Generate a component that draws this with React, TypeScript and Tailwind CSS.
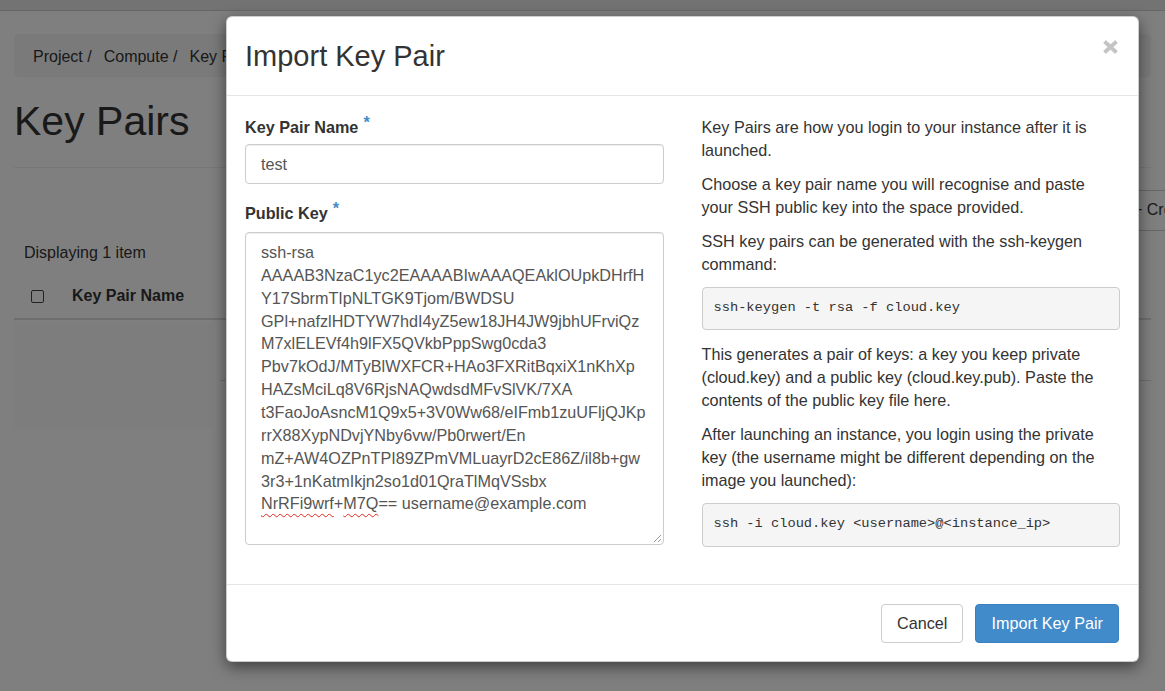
import React from 'react';

const keyLines = [
  'ssh-rsa',
  'AAAAB3NzaC1yc2EAAAABIwAAAQEAklOUpkDHrfH',
  'Y17SbrmTIpNLTGK9Tjom/BWDSU',
  'GPl+nafzlHDTYW7hdI4yZ5ew18JH4JW9jbhUFrviQz',
  'M7xlELEVf4h9lFX5QVkbPppSwg0cda3',
  'Pbv7kOdJ/MTyBlWXFCR+HAo3FXRitBqxiX1nKhXp',
  'HAZsMciLq8V6RjsNAQwdsdMFvSlVK/7XA',
  't3FaoJoAsncM1Q9x5+3V0Ww68/eIFmb1zuUFljQJKp',
  'rrX88XypNDvjYNby6vw/Pb0rwert/En',
  'mZ+AW4OZPnTPI89ZPmVMLuayrD2cE86Z/il8b+gw',
  '3r3+1nKatmIkjn2so1d01QraTlMqVSsbx',
];

const squiggle = 'underline decoration-wavy decoration-[#e0261c] decoration-1 underline-offset-[4px]';

// page behind the backdrop
const KeyPairsPage = () => (
  <div className="w-[1165px] h-[691px] bg-white text-[#333] text-[16px]">
    <div className="h-[11px] bg-[#e6e6e6] border-b border-[#cdcdcd]" />
    <div className="px-[14px]">
      <div className="mt-[23px] h-[43px] bg-[#f5f5f5] rounded-[4px] px-[19px] pt-[2px] flex items-center gap-[12px] whitespace-nowrap">
        <span>Project /</span>
        <span>Compute /</span>
        <span>Key Pairs</span>
      </div>
      <h1 className="mt-[21.5px] text-[41px] leading-[45px] font-normal">Key Pairs</h1>
      <div className="mt-[23px] border-t border-[#eeeeee]" />
      <div className="mt-[22px] flex pl-[1106px] whitespace-nowrap">
        <div className="h-[41px] border border-[#ccc] rounded-[4px] px-[12px] flex items-center">+ Create Key Pair</div>
      </div>
      <div className="mt-[10.5px] px-[10px] leading-[23px]">Displaying 1 item</div>
      <div className="mt-[10px] h-[46px] border-b-2 border-[#dddddd] flex items-center pl-[17px]">
        <div className="w-[13px] h-[13px] border border-[#444] rounded-[2px]" />
        <span className="ml-[28px] font-bold">Key Pair Name</span>
      </div>
      <div className="flex mt-[3px]">
        <div className="w-[199px] h-[105px] bg-[#fbfbfb]" />
        <div className="flex-1 ml-[7px] h-[58px] border-b border-[#dddddd]" />
      </div>
    </div>
  </div>
);

const Pre = ({ children, h }: { children: React.ReactNode; h: string }) => (
  <div className={`${h} bg-[#f5f5f5] border border-[#ccc] rounded-[4px] px-[11px] flex items-center font-['Liberation_Mono','DejaVu_Sans_Mono',monospace] text-[13.7px] text-[#333] whitespace-pre`}>
    {children}
  </div>
);

const Required = () => <span className="relative -top-[5px] ml-[5px] text-[#428bca]">*</span>;

const ImportKeyPairModal = () => (
  <div className="relative w-[913px] bg-white border border-black/20 rounded-[6px] shadow-[0_5px_15px_rgba(0,0,0,0.5)] text-[#333] text-[16.2px]">
    <div className="h-[79px] px-[18px] pt-[1px] flex items-center border-b border-[#e5e5e5]">
      <h4 className="text-[29px] font-normal leading-none">Import Key Pair</h4>
    </div>
    <svg className="absolute top-[22px] right-[19px]" width="17" height="16" viewBox="0 0 17 16">
      <path d="M2.5 2.5 L14.5 13.5 M14.5 2.5 L2.5 13.5" stroke="#c4c4c4" strokeWidth="3.8" strokeLinecap="butt" />
    </svg>

    <div className="h-[488px] px-[18px] pt-[20px] grid grid-cols-2 gap-[38px]">
      <div>
        <div className="font-bold leading-[23px]">
          Key Pair Name<Required />
        </div>
        <input
          readOnly
          defaultValue="test"
          className="mt-[5px] w-full h-[40px] border border-[#ccc] rounded-[4px] px-[15px] pt-[1px] text-[#555] shadow-[inset_0_1px_1px_rgba(0,0,0,0.075)] outline-none"
        />
        <div className="mt-[18px] font-bold leading-[23px]">
          Public Key<Required />
        </div>
        <div className="relative mt-[7px] h-[313px] border border-[#ccc] rounded-[4px] pl-[15px] pt-[8px] leading-[22.86px] text-[#555] whitespace-pre overflow-hidden shadow-[inset_0_1px_1px_rgba(0,0,0,0.075)]">
          {keyLines.map((line) => (
            <div key={line}>{line}</div>
          ))}
          <div>
            <span className={squiggle}>NrRFi9wrf</span>+<span className={squiggle}>M7Q</span>== username@example.com
          </div>
          <svg className="absolute bottom-[1px] right-[1px]" width="10" height="10" viewBox="0 0 10 10">
            <path d="M9 2 L2 9 M9 6 L6 9" stroke="#9a9a9a" strokeWidth="1" />
          </svg>
        </div>
      </div>

      <div className="leading-[22.86px]">
        <p className="mb-[11.43px]">Key Pairs are how you login to your instance after it is<br />launched.</p>
        <p className="mb-[11.43px]">Choose a key pair name you will recognise and paste<br />your SSH public key into the space provided.</p>
        <p className="mb-[11.43px]">SSH key pairs can be generated with the ssh-keygen<br />command:</p>
        <Pre h="h-[43px]">ssh-keygen -t rsa -f cloud.key</Pre>
        <p className="mt-[12.4px] mb-[11.43px]">This generates a pair of keys: a key you keep private<br />(cloud.key) and a public key (cloud.key.pub). Paste the<br />contents of the public key file here.</p>
        <p className="mb-[11.5px]">After launching an instance, you login using the private<br />key (the username might be different depending on the<br />image you launched):</p>
        <Pre h="h-[44px]">{'ssh -i cloud.key <username>@<instance_ip>'}</Pre>
      </div>
    </div>

    <div className="border-t border-[#e5e5e5] pt-[19px] pb-[18px] pr-[19px] flex justify-end gap-[12px]">
      <button className="h-[39px] px-[15px] border border-[#ccc] rounded-[4px] bg-white text-[#333]">Cancel</button>
      <button className="h-[39px] px-[15px] border border-[#3a80c0] rounded-[4px] bg-[#428bca] text-white">Import Key Pair</button>
    </div>
  </div>
);

export default function App() {
  return (
    <div className="relative w-[1165px] h-[691px] overflow-hidden font-['Liberation_Sans',Arial,sans-serif]">
      <KeyPairsPage />
      <div className="absolute inset-0 bg-black/50 pl-[226px] pt-[16px]">
        <ImportKeyPairModal />
      </div>
    </div>
  );
}
